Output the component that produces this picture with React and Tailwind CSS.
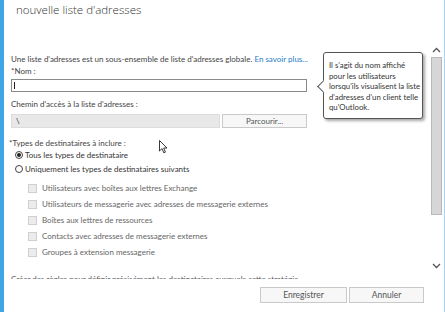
import React from "react";

const Chevron = ({ up }) => (
  <svg width="9" height="6" viewBox="0 0 9 6" className="block">
    <polyline
      points={up ? "1,5 4.5,1.5 8,5" : "1,1 4.5,4.5 8,1"}
      fill="none"
      stroke="#555"
      strokeWidth="1.3"
    />
  </svg>
);

const Radio = ({ checked, label }) => (
  <div className="flex h-[12px] items-center pl-[4px]">
    <span className="flex h-[8px] w-[8px] items-center justify-center rounded-full border border-[#444] bg-white">
      {checked && <span className="h-[4px] w-[4px] rounded-full bg-[#222]" />}
    </span>
    <span className="ml-[2px] text-[#333]">{label}</span>
  </div>
);

const Check = ({ label }) => (
  <div className="flex h-[16px] items-center pl-[17px]">
    <span className="h-[9px] w-[9px] border border-[#cfcfcf] bg-[#ececec]" />
    <span className="ml-[5px] text-[#666]">{label}</span>
  </div>
);

const types = [
  "Utilisateurs avec boîtes aux lettres Exchange",
  "Utilisateurs de messagerie avec adresses de messagerie externes",
  "Boîtes aux lettres de ressources",
  "Contacts avec adresses de messagerie externes",
  "Groupes à extension messagerie",
];

export default function App() {
  return (
    <div className="flex h-[312px] w-[445px] overflow-hidden bg-white font-['Lato',sans-serif] text-[8px] leading-[11px] text-[#444]">
      <div className="w-[4px] bg-[#3fa5e6]" />
      <div className="relative flex flex-1 flex-col">
        <div className="h-[45px] pl-[12px] pt-[3px] font-['Open_Sans',sans-serif] text-[11.5px] font-light leading-[14px] text-[#333]">
          nouvelle liste d'adresses
        </div>

        <div className="flex h-[234px]">
          <div className="flex-1 overflow-hidden pl-[7px] pt-[9px]">
            <p className="h-[11px]">
              Une liste d'adresses est un sous-ensemble de liste d'adresses globale.{" "}
              <span className="text-[#1e7cc8]">En savoir plus...</span>
            </p>
            <p className="mt-[1px] h-[11px]">*Nom :</p>
            <div className="mt-[2px] h-[13px] w-[296px] border border-[#8a8a8a] bg-white pl-[2px]">
              <span className="mt-[2px] block h-[7px] w-[1px] bg-[#222]" />
            </div>
            <p className="mt-[7px] h-[11px]">Chemin d'accès à la liste d'adresses :</p>
            <div className="mt-[4px] flex h-[14px] gap-[2px]">
              <div className="w-[209px] border border-[#dcdcdc] bg-[#e8e8e8] pl-[4px] leading-[12px] text-[#222]">
                \
              </div>
              <div className="flex w-[85px] items-center justify-center border border-[#c9c9c9] bg-[#f7f7f7] text-[#555]">
                Parcourir...
              </div>
            </div>
            <p className="-ml-[2px] mt-[10px] h-[11px]">*Types de destinataires à inclure :</p>
            <Radio checked label="Tous les types de destinataire" />
            <div className="mt-[2px]">
              <Radio label="Uniquement les types de destinataires suivants" />
            </div>
            <div className="mt-[5px]">
              {types.map((t) => (
                <Check key={t} label={t} />
              ))}
            </div>
            <p className="mt-[14px] whitespace-nowrap text-[#555]">
              Créer des règles pour définir précisément les destinataires auxquels cette stratégie
            </p>
          </div>

          <div className="flex w-[14px] flex-col items-start pl-[1px]">
            <div className="ml-[1px] mt-[2px]">
              <Chevron up />
            </div>
            <div className="mt-[4px] h-[158px] w-[11px] border border-[#b8b8b8] bg-[#d6d6d6]" />
            <div className="ml-[1px] mt-[48px]">
              <Chevron />
            </div>
          </div>
        </div>

        <div className="flex justify-end gap-[2px] pr-[20px] pt-[8px]">
          <button className="h-[16px] w-[87px] border border-[#c9c9c9] bg-[#f7f7f7] text-[8.5px] text-[#555]">
            Enregistrer
          </button>
          <button className="h-[16px] w-[75px] border border-[#c9c9c9] bg-[#f7f7f7] text-[8.5px] text-[#555]">
            Annuler
          </button>
        </div>

        <div className="absolute left-[319px] top-[52px] h-[67px] w-[100px] whitespace-nowrap rounded-[3px] border border-[#555] bg-white pl-[5px] pt-[7px] text-[7.8px] leading-[10.5px] text-[#333] shadow-[2px_2px_3px_rgba(0,0,0,0.35)]">
          <span className="absolute -left-[5px] top-[29px] h-[9px] w-[9px] rotate-45 border-b border-l border-[#555] bg-white" />
          <p className="relative">Il s'agit du nom affiché</p>
          <p className="relative">pour les utilisateurs</p>
          <p className="relative">lorsqu'ils visualisent la liste</p>
          <p className="relative">d'adresses d'un client telle</p>
          <p className="relative">qu'Outlook.</p>
        </div>

        <svg
          className="absolute left-[155px] top-[140px]"
          width="9"
          height="14"
          viewBox="0 0 9 14"
        >
          <path
            d="M0.5,0.5 L0.5,11 L3,8.6 L4.8,12.8 L6.4,12.1 L4.7,8 L8,8 Z"
            fill="white"
            stroke="#222"
            strokeWidth="0.9"
          />
        </svg>
      </div>
      <div className="w-[1px] bg-[#a6d4f2]" />
    </div>
  );
}
